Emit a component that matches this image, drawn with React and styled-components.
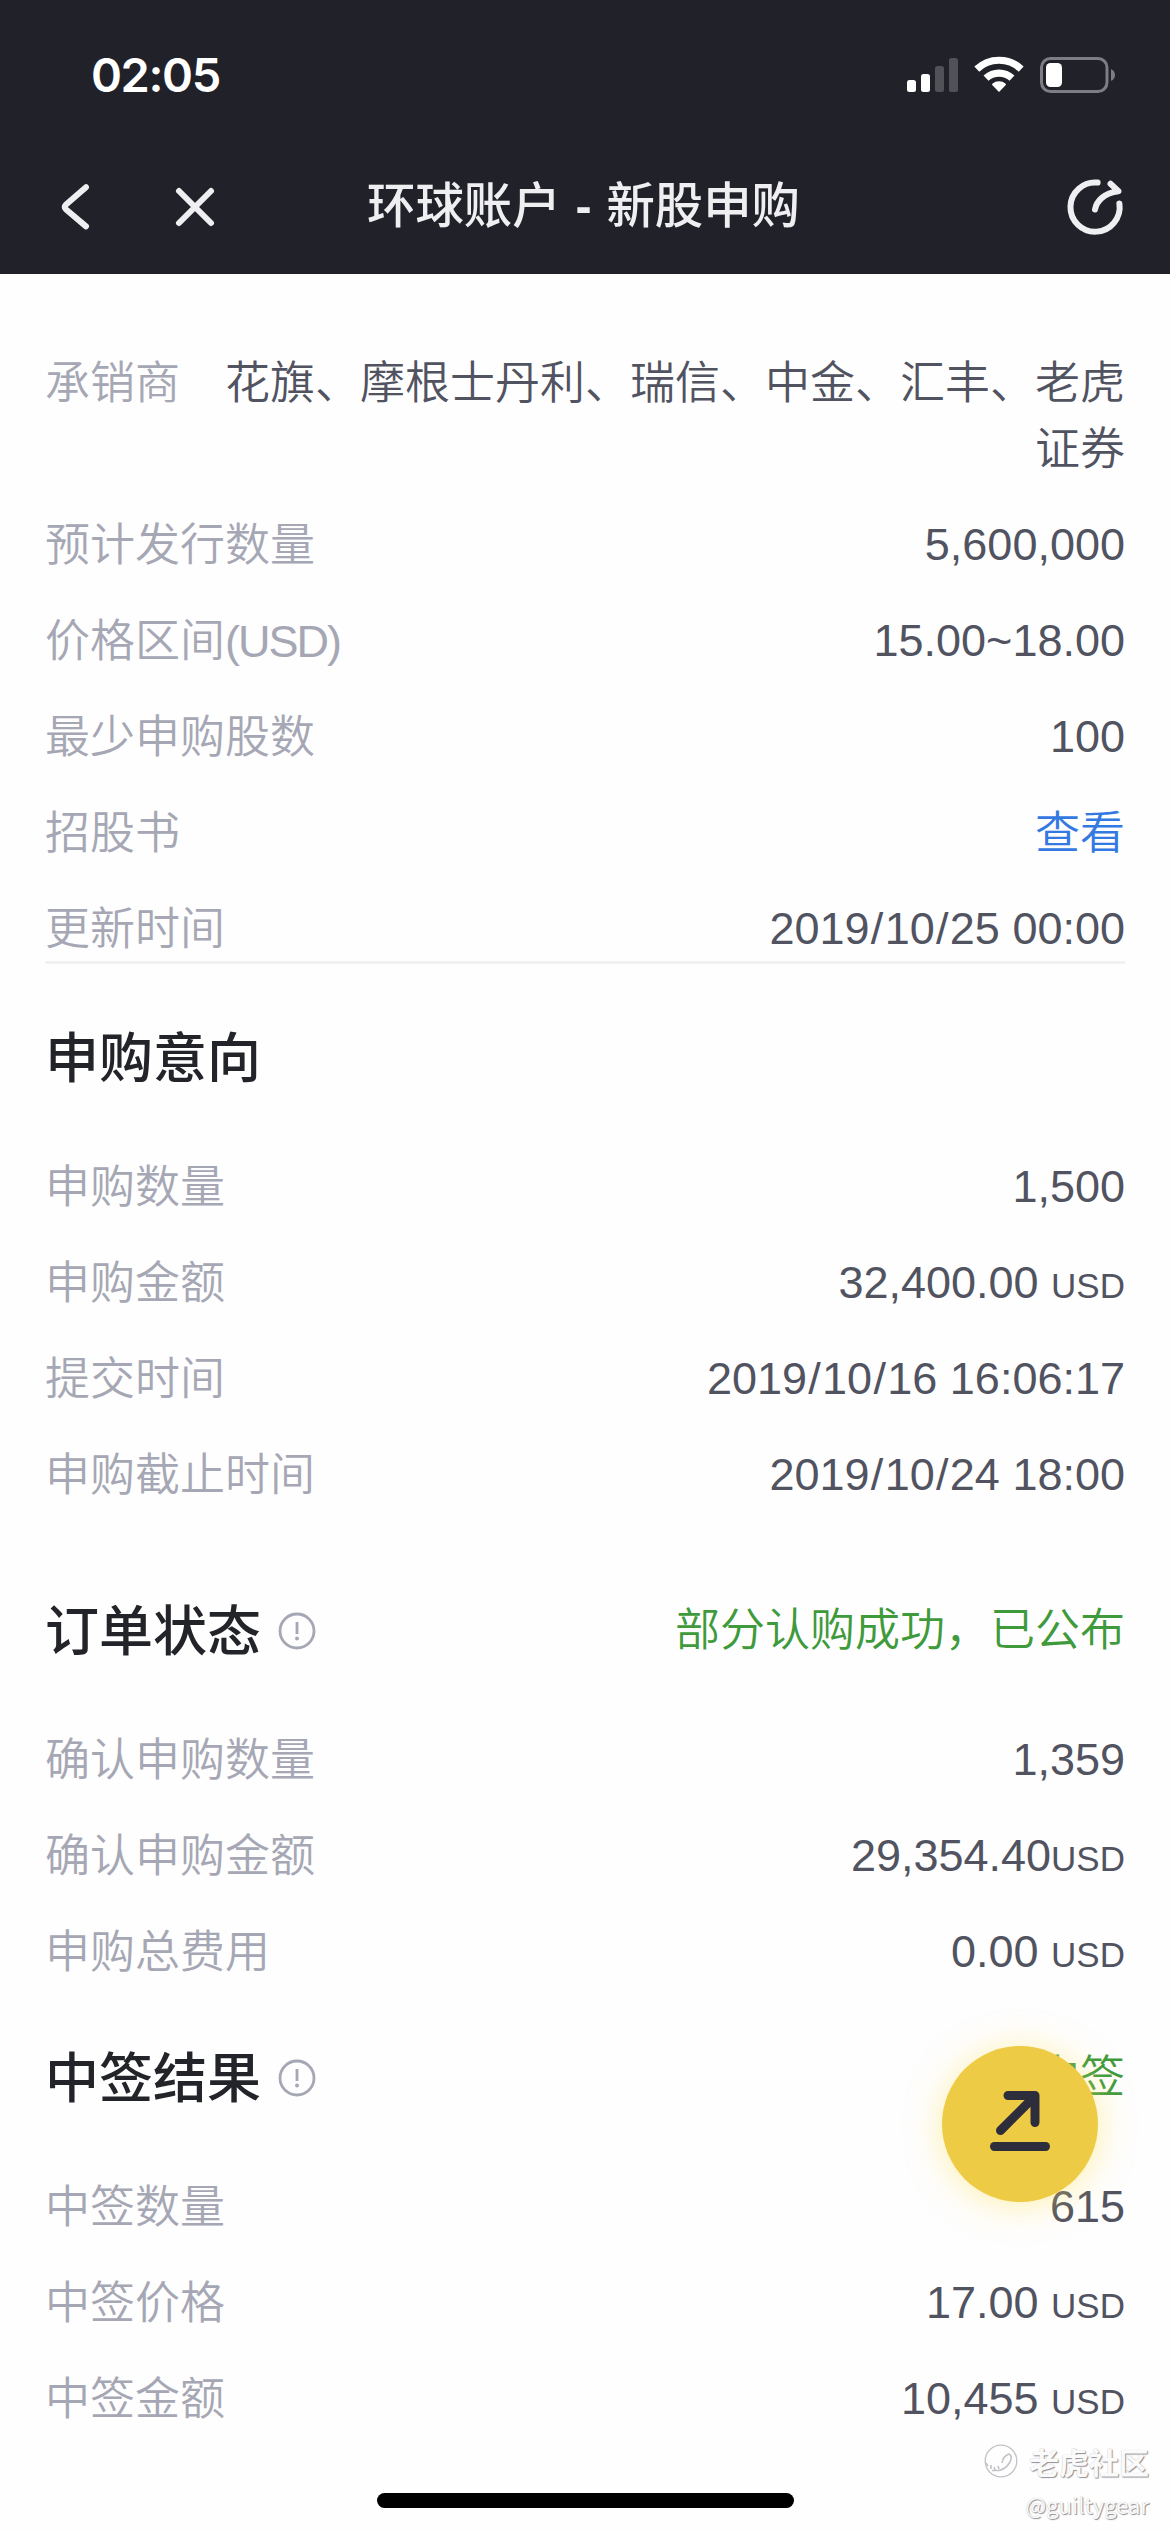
import React from "react";
import styled, { createGlobalStyle } from "styled-components";

const GlobalStyle = createGlobalStyle`
  * { box-sizing: border-box; }
  body {
    margin: 0;
    background: #fefefe;
    font-family: "Liberation Sans", "Noto Sans CJK SC", sans-serif;
  }
`;

const Screen = styled.div`
  position: relative;
  width: 1170px;
  height: 2532px;
  overflow: hidden;
  background: #fefefe;
`;

const Header = styled.header`
  height: 274px;
  background: #21212a;
  color: #efeff2;
`;

const StatusBar = styled.div`
  display: flex;
  justify-content: space-between;
  align-items: center;
  height: 141px;
  padding: 8px 54px 0 91px;
`;

const Clock = styled.span`
  font: 600 47px/60px Inter, sans-serif;
  color: #fff;
  letter-spacing: -1.4px;
`;

const StatusIcons = styled.svg`
  width: 210px;
  height: 40px;
`;

const NavBar = styled.nav`
  display: grid;
  grid-template-columns: 300px 1fr 300px;
  align-items: center;
  height: 132px;
`;

const NavLeft = styled.div`
  display: flex;
  align-items: center;
  gap: 71px;
  padding-left: 54px;
`;

const NavRight = styled.div`
  display: flex;
  justify-content: flex-end;
  padding-right: 43px;
`;

const NavIcon = styled.svg`
  display: block;
  width: ${(p) => p.$size}px;
  height: ${(p) => p.$size}px;
  fill: none;
  stroke: #efeff2;
  stroke-width: 6;
  stroke-linecap: round;
  stroke-linejoin: round;
`;

const NavTitle = styled.h1`
  margin: 0;
  padding: 0 3px 6px 0;
  text-align: center;
  white-space: nowrap;
  word-spacing: 4px;
  font: 500 48.4px/66px "Noto Sans CJK SC", sans-serif;
`;

const Dash = styled.span`
  font-family: "Liberation Sans", sans-serif;
  font-weight: 700;
`;

const Content = styled.main`
  padding: 75px 45px 0;
`;

const Rows = styled.dl`
  display: flex;
  flex-direction: column;
  gap: 30px;
  margin: 0;
  ${(p) => p.$divided && "border-bottom: 3px solid #f1f1f2;"}
`;

const Row = styled.div`
  display: flex;
  justify-content: space-between;
  height: ${(p) => (p.$tall ? 132 : 66)}px;
  font-size: 45px;
  font-weight: 350;
  line-height: 66px;
`;

const Label = styled.dt`
  flex: none;
  padding-top: 2px;
  color: #a6a7b4;
`;

const Latin = styled.span`
  letter-spacing: -2px;
`;

const Value = styled.dd`
  margin: 0;
  padding-top: ${(p) => (p.$wrap || p.$link ? 2 : 1)}px;
  width: ${(p) => (p.$wrap ? "910px" : "auto")};
  text-align: right;
  color: ${(p) => (p.$link ? "#3478e2" : "#515361")};
`;

const Slash = styled.span`
  padding: 0 1.3px;
`;

const Unit = styled.small`
  font-size: 35px;
  line-height: 1;
`;

const SectionHead = styled.div`
  display: flex;
  justify-content: space-between;
  align-items: center;
  height: 84px;
  margin: ${(p) => p.$top}px 0 56px;
`;

const SectionTitle = styled.h2`
  display: flex;
  align-items: center;
  gap: 17px;
  margin: 0;
  color: #222429;
  font: 500 54px/84px "Noto Sans CJK SC", sans-serif;
`;

const InfoIcon = styled.svg`
  width: 38px;
  height: 38px;
  margin-top: 6px;
`;

const Status = styled.span`
  margin-top: 6px;
  font-size: 45px;
  font-weight: 350;
  line-height: 66px;
  color: #3f9a3c;
`;

const FloatingButton = styled.button`
  position: absolute;
  left: 942px;
  top: 2046px;
  width: 156px;
  height: 156px;
  padding: 0;
  border: 0;
  border-radius: 50%;
  background: #eecb44;
  box-shadow: 0 3px 34px rgba(255, 225, 90, 0.5);
`;

const Watermark = styled.div`
  position: absolute;
  right: 21px;
  bottom: 11px;
  display: flex;
  flex-direction: column;
  align-items: flex-end;
  color: #fafafa;
  text-shadow: 1px 1px 1px #8e8e95, 0 0 1px #c4c4ca;
`;

const WatermarkBrand = styled.div`
  display: flex;
  align-items: center;
  gap: 11px;
  font: 700 30px/44px "Noto Sans CJK SC", sans-serif;
`;

const WatermarkUser = styled.div`
  margin-top: 4px;
  font: 400 22px/34px "Noto Sans CJK SC", sans-serif;
`;

const HomeIndicator = styled.div`
  position: absolute;
  left: 377px;
  bottom: 24px;
  width: 417px;
  height: 15px;
  border-radius: 8px;
  background: #000;
`;

const ipoRows = [
  { label: "承销商", value: "花旗、摩根士丹利、瑞信、中金、汇丰、老虎证券", wrap: true },
  { label: "预计发行数量", value: "5,600,000" },
  { label: "价格区间", suffix: "(USD)", value: "15.00~18.00" },
  { label: "最少申购股数", value: "100" },
  { label: "招股书", value: "查看", link: true },
  { label: "更新时间", value: "2019/10/25 00:00" },
];

const intentRows = [
  { label: "申购数量", value: "1,500" },
  { label: "申购金额", value: "32,400.00 ", unit: "USD" },
  { label: "提交时间", value: "2019/10/16 16:06:17" },
  { label: "申购截止时间", value: "2019/10/24 18:00" },
];

const orderRows = [
  { label: "确认申购数量", value: "1,359" },
  { label: "确认申购金额", value: "29,354.40", unit: "USD" },
  { label: "申购总费用", value: "0.00 ", unit: "USD" },
];

const resultRows = [
  { label: "中签数量", value: "615" },
  { label: "中签价格", value: "17.00 ", unit: "USD" },
  { label: "中签金额", value: "10,455 ", unit: "USD" },
];

function withSlashes(text) {
  return text.split("/").map((part, i) => (
    <React.Fragment key={i}>
      {i > 0 && <Slash>/</Slash>}
      {part}
    </React.Fragment>
  ));
}

function DetailRows({ rows, divided }) {
  return (
    <Rows $divided={divided}>
      {rows.map((row) => (
        <Row key={row.label} $tall={row.wrap}>
          <Label>
            {row.label}
            {row.suffix && <Latin>{row.suffix}</Latin>}
          </Label>
          <Value $wrap={row.wrap} $link={row.link}>
            {withSlashes(row.value)}
            {row.unit && <Unit>{row.unit}</Unit>}
          </Value>
        </Row>
      ))}
    </Rows>
  );
}

function Section({ title, top, status, info, rows }) {
  return (
    <section>
      <SectionHead $top={top}>
        <SectionTitle>
          {title}
          {info && (
            <InfoIcon viewBox="0 0 38 38" fill="none" stroke="#a6a7b4">
              <circle cx="19" cy="19" r="17" strokeWidth="2.8" />
              <path d="M19 10V22" strokeWidth="2.8" />
              <circle cx="19" cy="26.5" r="2" fill="#a6a7b4" stroke="none" />
            </InfoIcon>
          )}
        </SectionTitle>
        {status && <Status>{status}</Status>}
      </SectionHead>
      <DetailRows rows={rows} />
    </section>
  );
}

export default function App() {
  return (
    <Screen>
      <GlobalStyle />
      <Header>
        <StatusBar>
          <Clock>02:05</Clock>
          <StatusIcons viewBox="906 54 210 40">
            <g fill="#fff">
              <rect x="907" y="79" width="9" height="12" rx="2.5" />
              <rect x="921" y="73" width="9" height="18" rx="2.5" />
              <g fillOpacity="0.22">
                <rect x="935" y="65" width="9" height="26" rx="2.5" />
                <rect x="949" y="57" width="9" height="34" rx="2.5" />
              </g>
              <path d="M999 91 L992.2 83.9 A1.5 1.5 0 0 1 992.3 82.7 A10.5 10.5 0 0 1 1005.7 82.7 A1.5 1.5 0 0 1 1005.8 83.9 Z" />
            </g>
            <g fill="none" stroke="#fff" strokeWidth="7.2">
              <path d="M986 77.2 A19 19 0 0 1 1012 77.2" />
              <path d="M976.8 68.2 A32 32 0 0 1 1021.2 68.2" />
            </g>
            <rect x="1041.5" y="57.5" width="65.5" height="33" rx="9" fill="none" stroke="#7d7d83" strokeWidth="3" />
            <rect x="1046" y="62" width="16" height="24" rx="4.5" fill="#fff" />
            <path d="M1111 68 Q1115 70 1115 74 Q1115 78 1111 80 Z" fill="#7d7d83" />
          </StatusIcons>
        </StatusBar>
        <NavBar>
          <NavLeft>
            <NavIcon $size={48} viewBox="54 183 48 48">
              <path d="M86 187.2 L65.8 204.8 Q63.6 207 65.8 209.2 L86 226.4" />
            </NavIcon>
            <NavIcon $size={44} viewBox="173 185 44 44">
              <path d="M179 191 L211 223 M211 191 L179 223" />
            </NavIcon>
          </NavLeft>
          <NavTitle>
            环球账户 <Dash>-</Dash> 新股申购
          </NavTitle>
          <NavRight>
            <NavIcon $size={64} viewBox="1063 175 64 64">
              <path d="M1097.6 182.6 A24.6 24.6 0 1 0 1119.4 203.5" />
              <path d="M1095 209.5 C1096.5 201 1104 193 1118.5 191.2 L1110.5 183.8" />
            </NavIcon>
          </NavRight>
        </NavBar>
      </Header>
      <Content>
        <DetailRows rows={ipoRows} divided />
        <Section title="申购意向" top={49} rows={intentRows} />
        <Section title="订单状态" top={79} info status="部分认购成功，已公布" rows={orderRows} />
        <Section title="中签结果" top={49} info status="中签" rows={resultRows} />
      </Content>
      <FloatingButton aria-label="分享">
        <svg width="156" height="156" viewBox="942 2046 156 156" fill="none" stroke="#2e2d3c" strokeWidth="9" strokeLinecap="round" strokeLinejoin="round">
          <path d="M1000.5 2130.5 L1034 2097 M1008 2095.5 H1035 V2122.5" />
          <path d="M994.5 2146.5 H1045.5" />
        </svg>
      </FloatingButton>
      <Watermark>
        <WatermarkBrand>
          <svg width="34" height="34" viewBox="0 0 34 34" fill="none" stroke="#c2c2c8">
            <circle cx="17" cy="17" r="15.8" strokeWidth="1.3" />
            <path d="M2 19 L4 22 M7 21 V25 M10 23 L11 26 M14 22 L15 25 M18 19 Q19 12 25 10 Q29 12 26 18 Q22 25 15 26.5 H8" strokeWidth="1.6" />
          </svg>
          老虎社区
        </WatermarkBrand>
        <WatermarkUser>@guiltygear</WatermarkUser>
      </Watermark>
      <HomeIndicator />
    </Screen>
  );
}
